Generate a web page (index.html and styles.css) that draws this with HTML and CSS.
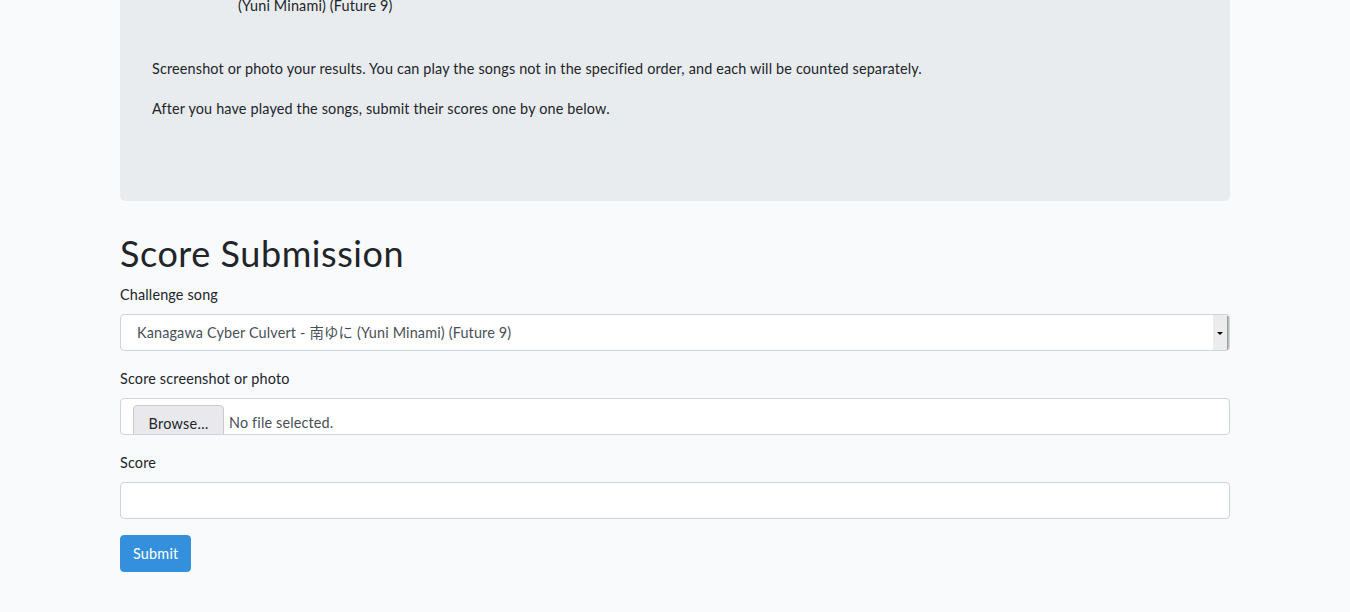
FILE: index.html
```html
<!DOCTYPE html>
<html lang="en">
<head>
<meta charset="utf-8">
<title>Score Submission</title>
<link rel="stylesheet" href="styles.css">
</head>
<body>
<main class="container">
  <section class="jumbotron">
    <div class="song-tail">(Yuni Minami) (Future 9)</div>
    <p>Screenshot or photo your results. You can play the songs not in the specified order, and each will be counted separately.</p>
    <p>After you have played the songs, submit their scores one by one below.</p>
  </section>

  <h1 class="title">Score Submission</h1>
  <form class="form">
    <div class="form-group">
      <label class="label">Challenge song</label>
      <div class="form-control select">
        <span class="select-text">Kanagawa Cyber Culvert - 南ゆに (Yuni Minami) (Future 9)</span>
        <span class="select-arrow"><span class="tri"></span></span>
      </div>
    </div>
    <div class="form-group">
      <label class="label">Score screenshot or photo</label>
      <div class="form-control file">
        <span class="browse">Browse…</span>
        <span class="file-text">No file selected.</span>
      </div>
    </div>
    <div class="form-group">
      <label class="label">Score</label>
      <div class="form-control"></div>
    </div>
    <button type="button" class="btn">Submit</button>
  </form>
</main>
</body>
</html>
```
FILE: styles.css
```css
html, body { margin: 0; padding: 0; }
body {
  background: #f8fafc;
  color: #212529;
  font-family: Lato, "Noto Sans CJK JP", sans-serif;
  font-size: 14.4px;
  letter-spacing: 0.16px;
  line-height: 23px;
}
.container { width: 1110px; margin: 0 auto; }
.jumbotron {
  background: #e9ecef;
  border-radius: 0 0 5px 5px;
  padding: 0 32px 65px;
  margin-bottom: 31px;
}
.song-tail { margin-top: -6px; padding-left: 86px; margin-bottom: 40px; }
.jumbotron p { margin: 0 0 17px; }
.jumbotron p:last-child { margin-bottom: 16px; }
.title {
  margin: 0 0 8px;
  font-size: 36px;
  font-weight: 400;
  line-height: 43px;
  letter-spacing: 0.55px;
}
.form-group { margin-bottom: 16px; }
.label { display: block; margin-bottom: 8px; }
.form-control {
  box-sizing: border-box;
  height: 37px;
  background: #fff;
  border: 1px solid #ced4da;
  border-radius: 4px;
  color: #495057;
  position: relative;
  overflow: hidden;
}
.select { display: flex; align-items: center; }
.select-text { padding-left: 16px; flex: 1; }
.select-arrow {
  align-self: stretch;
  width: 14px;
  margin-right: 2px;
  background: #ececec;
  box-shadow: 1px 1px 0 #9c9c9c, 2px 1px 0 #bdbdbd;
  display: flex;
  align-items: center;
  justify-content: center;
}
.tri {
  width: 0; height: 0;
  border-left: 3px solid transparent;
  border-right: 3px solid transparent;
  border-top: 3px solid #000;
  margin-top: 1px;
}
.file { display: flex; align-items: flex-start; padding-left: 12px; }
.browse {
  margin-top: 6px;
  box-sizing: border-box;
  width: 91px;
  height: 36px;
  padding-top: 6px;
  text-align: center;
  background: #e9e9ed;
  border: 1px solid #c9c9cf;
  border-radius: 4px;
  color: #212529;
  letter-spacing: 0.3px;
}
.file-text { margin-left: 5px; margin-top: 12px; }
.btn {
  font: inherit;
  letter-spacing: 0.2px;
  height: 37px;
  padding: 0 12px;
  background: #3490dc;
  border: 1px solid #3490dc;
  border-radius: 4px;
  color: #fff;
}
```
